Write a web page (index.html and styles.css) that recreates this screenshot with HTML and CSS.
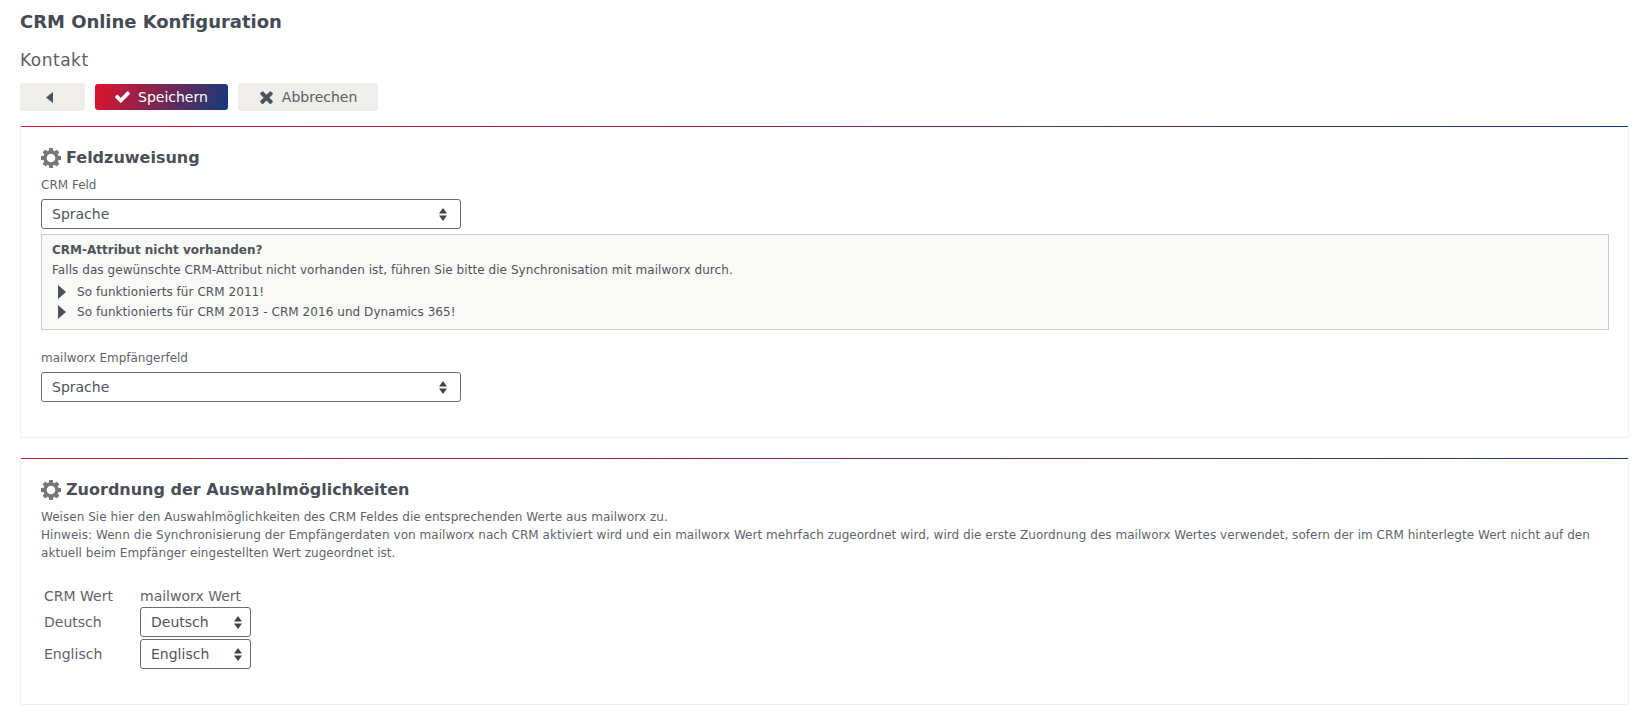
FILE: index.html
```html
<!DOCTYPE html>
<html lang="de">
<head>
<meta charset="utf-8">
<title>CRM Online Konfiguration</title>
<link rel="stylesheet" href="styles.css">
</head>
<body>
<h1 class="title">CRM Online Konfiguration</h1>
<h2 class="subtitle">Kontakt</h2>
<div class="toolbar">
  <button class="btn btn-back" type="button"><svg class="caret-icon" viewBox="0 0 6 10" preserveAspectRatio="none"><path d="M6 0V10L0 5Z"/></svg></button>
  <button class="btn btn-primary" type="button"><svg class="icon-check" viewBox="121 300 1550 1250"><path d="M1671 566q0 40-28 68l-724 724-136 136q-28 28-68 28t-68-28l-136-136-362-362q-28-28-28-68t28-68l136-136q28-28 68-28t68 28l294 295 656-657q28-28 68-28t68 28l136 136q28 28 28 68z"/></svg>Speichern</button>
  <button class="btn btn-cancel" type="button"><svg class="icon-times" viewBox="302 238 1188 1316"><path d="M1490 1322q0 40-28 68l-136 136q-28 28-68 28t-68-28l-294-294-294 294q-28 28-68 28t-68-28l-136-136q-28-28-28-68t28-68l294-294-294-294q-28-28-28-68t28-68l136-136q28-28 68-28t68 28l294 294 294-294q28-28 68-28t68 28l136 136q28 28 28 68t-28 68l-294 294 294 294q28 28 28 68z"/></svg>Abbrechen</button>
</div>

<section class="card card-first">
  <h3 class="card-title"><svg class="gear" viewBox="0 0 1536 1536"><path fill-rule="evenodd" d="M1098 768a330 330 0 1 0-660 0 330 330 0 1 0 660 0zM1536 659v222q0 12-8 23t-20 13l-185 28q-19 54-39 91 35 50 107 138 10 12 10 25t-9 23q-27 37-99 108t-94 71q-12 0-26-9l-138-108q-44 23-91 38-16 136-29 186-7 28-36 28h-222q-14 0-24.500-8.500t-11.500-21.500l-28-184q-49-16-90-37l-141 107q-10 9-25 9-14 0-25-11-126-114-165-168-7-10-7-23 0-12 8-23 15-21 51-66.500t54-70.500q-27-50-41-99l-183-27q-13-2-21-12.500t-8-23.500v-222q0-12 8-23t19-13l186-28q14-46 39-92-40-57-107-138-10-12-10-24 0-10 9-23 26-36 98.500-107.500t94.500-71.500q13 0 26 10l138 107q44-23 91-38 16-136 29-186 7-28 36-28h222q14 0 24.500 8.500t11.500 21.500l28 184q49 16 90 37l142-107q9-9 24-9 13 0 25 10 129 119 165 170 7 8 7 22 0 12-8 23-15 21-51 66.500t-54 70.500q26 50 41 98l183 28q13 2 21 12.500t8 23.500z"/></svg>Feldzuweisung</h3>
  <label class="field-label" for="crm-field">CRM Feld</label>
  <select class="select select-wide" id="crm-field"><option>Sprache</option></select>
  <div class="notice">
    <p class="notice-title">CRM-Attribut nicht vorhanden?</p>
    <p class="notice-text">Falls das gewünschte CRM-Attribut nicht vorhanden ist, führen Sie bitte die Synchronisation mit mailworx durch.</p>
    <a class="notice-link" href="#"><svg class="caret-right" viewBox="0 0 8 14"><path d="M0 0L8 7L0 14Z"/></svg>So funktionierts für CRM 2011!</a>
    <a class="notice-link" href="#"><svg class="caret-right" viewBox="0 0 8 14"><path d="M0 0L8 7L0 14Z"/></svg>So funktionierts für CRM 2013 - CRM 2016 und Dynamics 365!</a>
  </div>
  <label class="field-label field-label-second" for="mw-field">mailworx Empfängerfeld</label>
  <select class="select select-wide" id="mw-field"><option>Sprache</option></select>
</section>

<section class="card card-second">
  <h3 class="card-title"><svg class="gear" viewBox="0 0 1536 1536"><path fill-rule="evenodd" d="M1098 768a330 330 0 1 0-660 0 330 330 0 1 0 660 0zM1536 659v222q0 12-8 23t-20 13l-185 28q-19 54-39 91 35 50 107 138 10 12 10 25t-9 23q-27 37-99 108t-94 71q-12 0-26-9l-138-108q-44 23-91 38-16 136-29 186-7 28-36 28h-222q-14 0-24.500-8.500t-11.500-21.500l-28-184q-49-16-90-37l-141 107q-10 9-25 9-14 0-25-11-126-114-165-168-7-10-7-23 0-12 8-23 15-21 51-66.500t54-70.500q-27-50-41-99l-183-27q-13-2-21-12.500t-8-23.500v-222q0-12 8-23t19-13l186-28q14-46 39-92-40-57-107-138-10-12-10-24 0-10 9-23 26-36 98.500-107.500t94.500-71.500q13 0 26 10l138 107q44-23 91-38 16-136 29-186 7-28 36-28h222q14 0 24.500 8.500t11.500 21.500l28 184q49 16 90 37l142-107q9-9 24-9 13 0 25 10 129 119 165 170 7 8 7 22 0 12-8 23-15 21-51 66.500t-54 70.500q26 50 41 98l183 28q13 2 21 12.500t8 23.500z"/></svg>Zuordnung der Auswahlmöglichkeiten</h3>
  <p class="description">Weisen Sie hier den Auswahlmöglichkeiten des CRM Feldes die entsprechenden Werte aus mailworx zu.<br>Hinweis: Wenn die Synchronisierung der Empfängerdaten von mailworx nach CRM aktiviert wird und ein mailworx Wert mehrfach zugeordnet wird, wird die erste Zuordnung des mailworx Wertes verwendet, sofern der im CRM hinterlegte Wert nicht auf den aktuell beim Empfänger eingestellten Wert zugeordnet ist.</p>
  <table class="mapping">
    <thead><tr><th>CRM Wert</th><th>mailworx Wert</th></tr></thead>
    <tbody>
      <tr><td>Deutsch</td><td><select class="select select-small"><option>Deutsch</option></select></td></tr>
      <tr><td>Englisch</td><td><select class="select select-small"><option>Englisch</option></select></td></tr>
    </tbody>
  </table>
</section>
</body>
</html>
```
FILE: styles.css
```css
* { box-sizing: border-box; }
html, body { margin: 0; padding: 0; }
body {
  background: #fff;
  color: #4f545c;
  font-family: "DejaVu Sans", Verdana, sans-serif;
  font-size: 12px;
  padding: 0 4px 0 20px;
  height: 706px;
  overflow: hidden;
}
.title { margin: 0; padding-top: 12px; font-size: 18px; line-height: 20px; font-weight: 700; letter-spacing: -.03px; color: #454b54; }
.subtitle { margin: 18px 0 0; font-size: 17px; letter-spacing: .5px; line-height: 20px; font-weight: 400; color: #5b6067; }
.toolbar { display: flex; align-items: center; gap: 10px; margin-top: 13px; height: 28px; }
.btn {
  display: inline-flex; align-items: center; justify-content: center;
  height: 28px; border: 0; border-radius: 3px;
  background: #efeeeb; color: #5b6067;
  font: 14px "DejaVu Sans", Verdana, sans-serif;
  padding: 0;
}
.btn-back { width: 65px; padding-right: 6px; }
.btn-primary {
  height: 26px; padding: 0 20px; gap: 8px; color: #fff;
  background: linear-gradient(115deg, #e2132b 0%, #0f3b7d 100%);
}
.btn-cancel { padding: 0 21px 0 22px; gap: 9px; }
.caret-icon { width: 7px; height: 11px; fill: #4a525c; }
.icon-check { width: 15px; height: 12px; fill: #fff; }
.icon-times { width: 13px; height: 14px; fill: #4a525c; }
.card {
  position: relative;
  border: 1px solid #f0f0f0; border-top: 0; border-radius: 0 0 3px 3px;
  padding: 0 20px;
  background: #fff;
}
.card::before {
  content: ""; display: block; position: absolute; left: 0; right: 0; top: 0; height: 1px;
  background: linear-gradient(90deg, #e2132b 0%, #0f3b7d 100%);
}
.card-first { margin-top: 15px; height: 312px; }
.card-second { margin-top: 20px; height: 247px; }
.card-title {
  display: flex; align-items: center; gap: 5px;
  margin: 0; padding-top: 21px; font-size: 16px; line-height: 22px; font-weight: 700; color: #4a4f57;
}
.gear { width: 20px; height: 20px; fill: #777; flex: none; }
.field-label { display: block; margin-top: 8px; font-size: 12px; line-height: 16px; color: #5f646c; }
.field-label-second { margin-top: 20px; }
.select {
  display: block; appearance: none; -webkit-appearance: none;
  height: 30px; border: 1px solid #6b6b6b; border-radius: 3px;
  color: #4f545c; font: 14px "DejaVu Sans", Verdana, sans-serif;
  padding: 0 10px;
  background: #fff url("data:image/svg+xml,%3Csvg xmlns='http://www.w3.org/2000/svg' width='8' height='13'%3E%3Cpath d='M4 0L8 5.500H0Z M0 7.500H8L4 13Z' fill='%23444'/%3E%3C/svg%3E") no-repeat right 13px center;
}
.select-wide { width: 420px; margin-top: 6px; }
.select-small { width: 111px; background-position: right 8px center; }
.notice {
  margin-top: 5px; width: 1568px; height: 96px;
  background: #f9f9f7; border: 1px solid #ccc;
  padding: 5px 10px;
  font-size: 12px;
  letter-spacing: .06px;
}
.notice p { margin: 0; line-height: 20px; }
.notice-title { font-weight: 700; letter-spacing: 0; }
.notice p.notice-text { margin-bottom: 2px; }
.notice-link { display: flex; align-items: center; gap: 11px; padding-left: 6px; height: 20px; color: #4f545c; text-decoration: none; }
.caret-right { width: 8px; height: 14px; fill: #4a525c; flex: none; }
.description { margin: 7px 0 0; font-size: 12px; line-height: 18px; letter-spacing: .04px; color: #5f646c; }
.mapping { margin-top: 23px; border-collapse: separate; border-spacing: 3px 2px; font-size: 14px; color: #5f646c; }
.mapping th { font-weight: 400; text-align: left; padding: 0; line-height: 18px; }
.mapping th:first-child { width: 93px; }
.mapping td { padding: 0; height: 30px; }
```
